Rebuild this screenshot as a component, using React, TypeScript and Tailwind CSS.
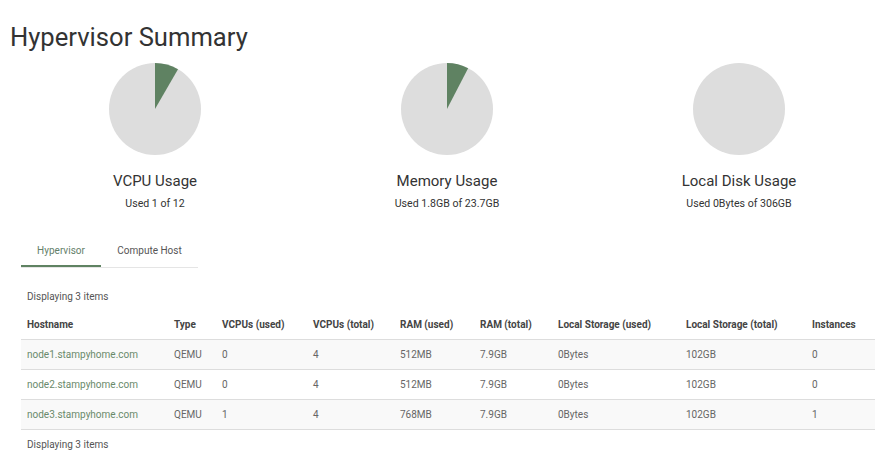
import React from 'react'

type Chart = { title: string; used: string; fraction: number }

const charts: Chart[] = [
    { title: 'VCPU Usage', used: 'Used 1 of 12', fraction: 1 / 12 },
    { title: 'Memory Usage', used: 'Used 1.8GB of 23.7GB', fraction: 1.8 / 23.7 },
    { title: 'Local Disk Usage', used: 'Used 0Bytes of 306GB', fraction: 0 },
]

const columns = [
    { label: 'Hostname', w: 'w-[147px]' },
    { label: 'Type', w: 'w-[48px]' },
    { label: 'VCPUs (used)', w: 'w-[91px]' },
    { label: 'VCPUs (total)', w: 'w-[87px]' },
    { label: 'RAM (used)', w: 'w-[80px]' },
    { label: 'RAM (total)', w: 'w-[78px]' },
    { label: 'Local Storage (used)', w: 'w-[128px]' },
    { label: 'Local Storage (total)', w: 'w-[126px]' },
    { label: 'Instances', w: 'w-auto' },
]

const rows = [
    ['node1.stampyhome.com', 'QEMU', '0', '4', '512MB', '7.9GB', '0Bytes', '102GB', '0'],
    ['node2.stampyhome.com', 'QEMU', '0', '4', '512MB', '7.9GB', '0Bytes', '102GB', '0'],
    ['node3.stampyhome.com', 'QEMU', '1', '4', '768MB', '7.9GB', '0Bytes', '102GB', '1'],
]

function Pie({ fraction }: { fraction: number }) {
    const r = 46
    const a = fraction * Math.PI * 2
    const x = 46 + r * Math.sin(a)
    const y = 46 - r * Math.cos(a)
    const large = fraction > 0.5 ? 1 : 0
    return (
        <svg width="92" height="92" viewBox="0 0 92 92">
            <circle cx="46" cy="46" r={r} fill="#dddddd" />
            {fraction > 0 && (
                <path d={`M46 46 L46 0 A${r} ${r} 0 ${large} 1 ${x} ${y} Z`} fill="#5f8262" />
            )}
        </svg>
    )
}

export default function App() {
    return (
        <div className="w-[889px] h-[470px] bg-white text-[#333] font-['Roboto',sans-serif] overflow-hidden">
            <h1 className="pl-[10px] pt-[20px] text-[25.6px] leading-[34px] text-[#333]">Hypervisor Summary</h1>

            <div className="flex pl-[9px] mt-[9px]">
                {charts.map((c) => (
                    <div key={c.title} className="w-[292px] flex flex-col items-center">
                        <Pie fraction={c.fraction} />
                        <div className="mt-[16px] text-[15px] leading-[20px] text-[#333]">{c.title}</div>
                        <div className="mt-[5px] text-[10.6px] leading-[16px] text-[#333]">{c.used}</div>
                    </div>
                ))}
            </div>

            <div className="ml-[21px] mt-[19px] flex w-[177px] border-b border-[#e5e5e5] text-[10px]">
                <div className="w-[80px] h-[36px] flex items-start justify-center pt-[12px] text-[#64806a] border-b-2 border-[#5f8262] -mb-px">Hypervisor</div>
                <div className="flex-1 h-[36px] flex items-start justify-center pt-[12px] text-[#555]">Compute Host</div>
            </div>

            <div className="ml-[21px] mr-[14px] mt-[15px] text-[10px]">
                <div className="pl-[6px] h-[27px] leading-[27px] text-[#555]">Displaying 3 items</div>
                <div className="flex h-[30px] items-center border-b border-[#dddddd] font-bold text-[#444]">
                    {columns.map((c) => (
                        <div key={c.label} className={`${c.w} pl-[6px]`}>{c.label}</div>
                    ))}
                </div>
                {rows.map((r, i) => (
                    <div key={i} className={`flex h-[30px] items-center border-b border-[#dddddd] ${i % 2 === 0 ? 'bg-[#f9f9f9]' : 'bg-white'}`}>
                        {r.map((cell, j) => (
                            <div key={j} className={`${columns[j].w} pl-[6px] ${j === 0 ? 'text-[#6a8a6b]' : 'text-[#666]'}`}>{cell}</div>
                        ))}
                    </div>
                ))}
                <div className="pl-[6px] h-[30px] leading-[30px] text-[#555]">Displaying 3 items</div>
            </div>
        </div>
    )
}
